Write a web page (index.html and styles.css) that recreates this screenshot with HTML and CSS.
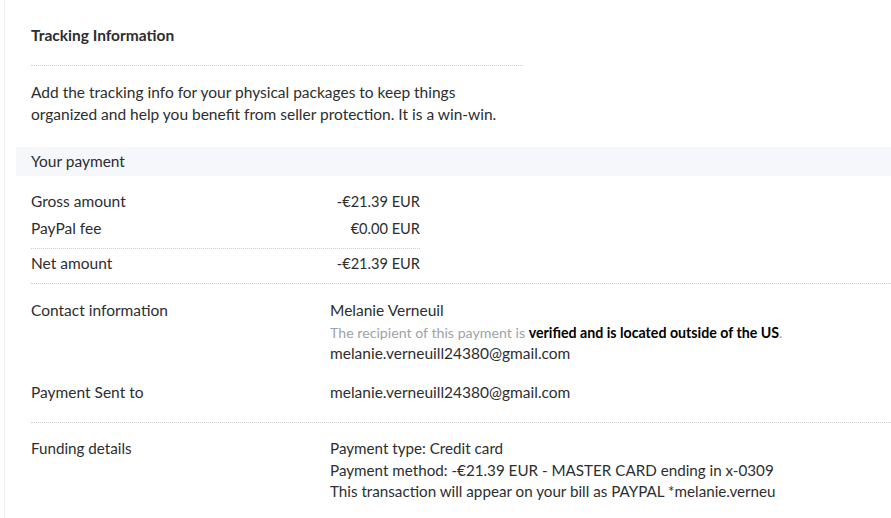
FILE: index.html
```html
<!DOCTYPE html>
<html>
<head>
<meta charset="utf-8">
<link rel="stylesheet" href="styles.css">
</head>
<body>
<div class="page">
  <section class="tracking">
    <h2 class="tracking-title">Tracking Information</h2>
    <div class="tracking-rule"></div>
    <p class="tracking-text">Add the tracking info for your physical packages to keep things<br>organized and help you benefit from seller protection. It is a win-win.</p>
  </section>

  <div class="bar">Your payment</div>

  <section class="amounts">
    <div class="amount-row"><span>Gross amount</span><span class="amount">-€21.39 EUR</span></div>
    <div class="amount-row"><span>PayPal fee</span><span class="amount">€0.00 EUR</span></div>
    <div class="amount-rule"></div>
    <div class="amount-row amount-net"><span>Net amount</span><span class="amount">-€21.39 EUR</span></div>
  </section>

  <div class="rule"></div>

  <section class="detail detail-contact">
    <div class="detail-label">Contact information</div>
    <div class="detail-value">
      <div>Melanie Verneuil</div>
      <div class="note">The recipient of this payment is <b>verified and is located outside of the US</b>.</div>
      <div>melanie.verneuill24380@gmail.com</div>
    </div>
  </section>

  <section class="detail detail-sent">
    <div class="detail-label">Payment Sent to</div>
    <div class="detail-value">
      <div>melanie.verneuill24380@gmail.com</div>
    </div>
  </section>

  <div class="rule rule-tight"></div>

  <section class="detail detail-funding">
    <div class="detail-label">Funding details</div>
    <div class="detail-value">
      <div>Payment type: Credit card</div>
      <div>Payment method: -€21.39 EUR - MASTER CARD ending in x-0309</div>
      <div>This transaction will appear on your bill as PAYPAL *melanie.verneu</div>
    </div>
  </section>
</div>
</body>
</html>
```
FILE: styles.css
```css
html, body {
  margin: 0;
  padding: 0;
  background: #ffffff;
}
body {
  font-family: Lato, "Noto Sans", sans-serif;
  font-size: 15.5px;
  color: #2c2e2f;
  overflow: hidden;
}
.page {
  margin-left: 4px;
  border-left: 1px solid #eeeeee;
  padding-left: 11px;
  min-height: 518px;
  box-sizing: border-box;
}
.tracking {
  padding: 25px 0 0 15px;
}
.tracking-title {
  margin: 0;
  font-size: 15.5px;
  font-weight: 700;
  line-height: 20px;
  color: #2c2e2f;
}
.tracking-rule {
  width: 492px;
  border-top: 1px dotted #c9cfd3;
  margin-top: 20px;
}
.tracking-text {
  margin: 15px 0 0 0;
  line-height: 22px;
}
.bar {
  margin-top: 22px;
  height: 29px;
  line-height: 29px;
  padding-left: 15px;
  background: #f5f7fa;
}
.amounts {
  width: 389px;
  margin-left: 15px;
  padding-top: 12px;
}
.amount-row {
  display: flex;
  justify-content: space-between;
  line-height: 27px;
}
.amount {
  font-size: 14.6px;
}
.amount-rule {
  border-top: 1px dotted #c9cfd3;
  margin-top: 6px;
}
.amount-net {
  padding-top: 1px;
}
.rule {
  margin-left: 15px;
  border-top: 1px dotted #c9cfd3;
  margin-top: 6px;
}
.detail {
  display: grid;
  grid-template-columns: 299px 1fr;
  margin-left: 15px;
  line-height: 21.5px;
}
.detail-contact {
  padding-top: 16px;
}
.detail-sent {
  padding-top: 17px;
  padding-bottom: 19px;
}
.rule-tight {
  margin-top: 0;
}
.detail-funding {
  padding-top: 15px;
  font-size: 15.2px;
}
.note {
  color: #9da3a6;
  font-size: 14.2px;
}
.note b {
  color: #000000;
  font-weight: 700;
}
```
